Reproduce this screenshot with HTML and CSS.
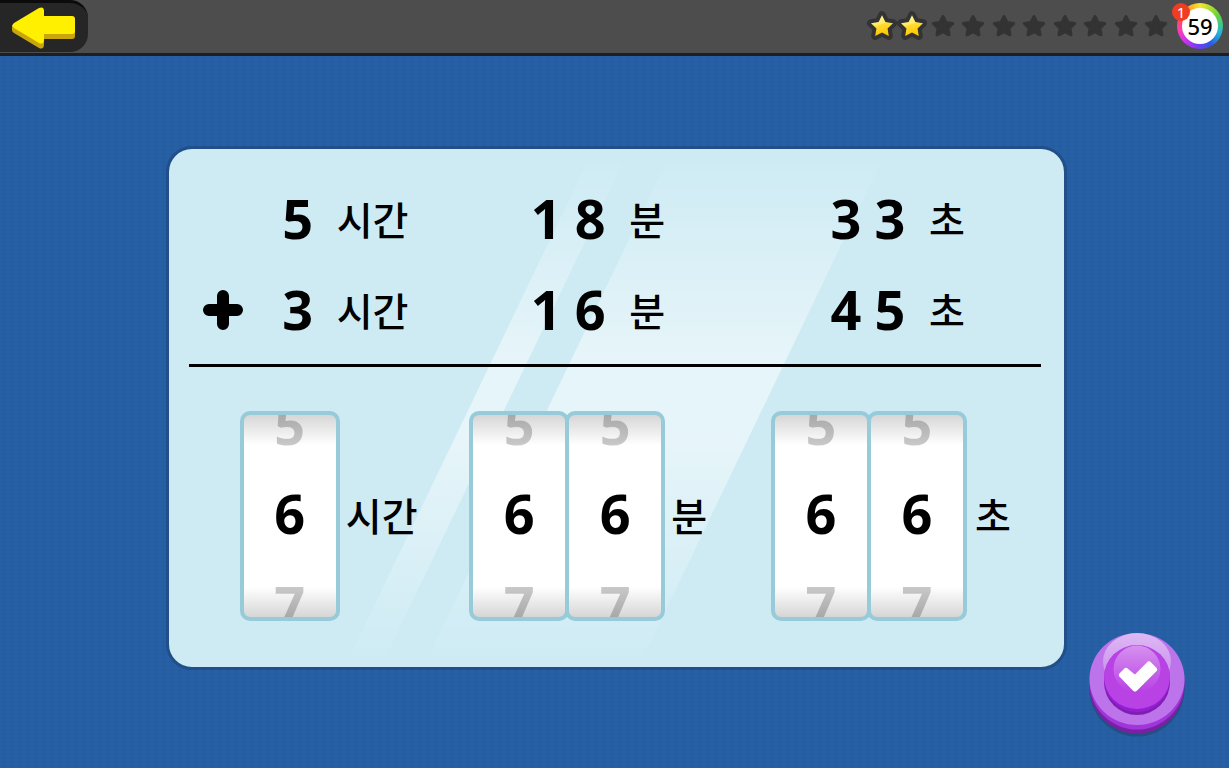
FILE: index.html
```html
<!DOCTYPE html>
<html lang="ko">
<head>
<meta charset="utf-8">
<title>시간의 덧셈</title>
<link rel="stylesheet" href="styles.css">
</head>
<body>
<svg class="defs" aria-hidden="true">
  <defs>
    <linearGradient id="gold" x1="0" y1="0" x2="0.3" y2="1">
      <stop offset="0" stop-color="#fffbb0"/><stop offset="0.5" stop-color="#ffea62"/><stop offset="0.55" stop-color="#ffdc32"/><stop offset="1" stop-color="#ffc800"/>
    </linearGradient>
    <symbol id="star" viewBox="0 0 30 30">
      <path d="M15 5.500l3 6 6.700 1-4.800 4.700 1.100 6.600-6-3.100-6 3.100 1.100-6.600-4.800-4.700 6.700-1z" stroke-linejoin="round"/>
    </symbol>
  </defs>
</svg>
<header class="bar">
  <button class="back" type="button" aria-label="뒤로">
    <svg viewBox="0 0 64 42" aria-hidden="true">
      <path d="M0 18V23Q0 25 2 26L27 41Q32 43 32 37V32H60Q63 32 63 29V12Z" fill="#c9a60b"/>
      <path d="M2 16L27 1Q32-1 32 4V9H60Q63 9 63 12V24Q63 27 60 27H32V32Q32 38 27 36L2 21Q-1 18.500 2 16Z" fill="#fff000"/>
    </svg>
  </button>
  <div class="progress" role="img" aria-label="2 / 10">
    <svg class="star on"><use href="#star"/></svg>
    <svg class="star on"><use href="#star"/></svg>
    <svg class="star"><use href="#star"/></svg>
    <svg class="star"><use href="#star"/></svg>
    <svg class="star"><use href="#star"/></svg>
    <svg class="star"><use href="#star"/></svg>
    <svg class="star"><use href="#star"/></svg>
    <svg class="star"><use href="#star"/></svg>
    <svg class="star"><use href="#star"/></svg>
    <svg class="star"><use href="#star"/></svg>
  </div>
  <div class="score"><span class="score-value">59</span><span class="badge">1</span></div>
</header>
<main class="stage">
  <section class="board">
    <svg class="shine" viewBox="0 0 896 520" preserveAspectRatio="none" aria-hidden="true">
      <defs>
        <linearGradient id="glass" gradientUnits="userSpaceOnUse" x1="0" y1="10" x2="0" y2="515">
          <stop offset="0" stop-color="#fff" stop-opacity="0"/><stop offset="0.4" stop-color="#fff" stop-opacity="0.5"/><stop offset="0.56" stop-color="#fff" stop-opacity="0.5"/><stop offset="1" stop-color="#fff" stop-opacity="0"/>
        </linearGradient>
      </defs>
      <path d="M425 0H461L212 520H176ZM504 0H719L470 520H255Z" fill="url(#glass)"/>
    </svg>
    <div class="row">
      <span></span>
      <div class="term"><b>5</b><span class="unit">시간</span></div>
      <div class="term"><b>1</b><b>8</b><span class="unit">분</span></div>
      <div class="term"><b>3</b><b>3</b><span class="unit">초</span></div>
    </div>
    <div class="row">
      <svg class="plus" viewBox="0 0 42 42" role="img" aria-label="+"><path d="M21 7V35M7 21H35"/></svg>
      <div class="term"><b>3</b><span class="unit">시간</span></div>
      <div class="term"><b>1</b><b>6</b><span class="unit">분</span></div>
      <div class="term"><b>4</b><b>5</b><span class="unit">초</span></div>
    </div>
    <hr class="rule">
    <div class="answers">
      <div class="answer">
        <div class="reels">
          <div class="reel"><button type="button">5</button><output>6</output><button type="button">7</button></div>
        </div>
        <span class="unit">시간</span>
      </div>
      <div class="answer">
        <div class="reels">
          <div class="reel"><button type="button">5</button><output>6</output><button type="button">7</button></div>
          <div class="reel"><button type="button">5</button><output>6</output><button type="button">7</button></div>
        </div>
        <span class="unit">분</span>
      </div>
      <div class="answer">
        <div class="reels">
          <div class="reel"><button type="button">5</button><output>6</output><button type="button">7</button></div>
          <div class="reel"><button type="button">5</button><output>6</output><button type="button">7</button></div>
        </div>
        <span class="unit">초</span>
      </div>
    </div>
  </section>
</main>
<button class="confirm" type="button" aria-label="확인">
  <svg viewBox="0 0 96 104" aria-hidden="true">
    <defs>
      <linearGradient id="outer-gloss" x1="0" y1="0" x2="0" y2="1"><stop offset="0" stop-color="#fff" stop-opacity="0.5"/><stop offset="1" stop-color="#fff" stop-opacity="0.12"/></linearGradient>
      <linearGradient id="inner-gloss" x1="0" y1="0" x2="0" y2="1"><stop offset="0" stop-color="#fff" stop-opacity="0.42"/><stop offset="1" stop-color="#fff" stop-opacity="0"/></linearGradient>
    </defs>
    <circle cx="48" cy="56" r="47.500" fill="#234f85"/>
    <circle cx="48" cy="53" r="47.500" fill="#7a20a2"/>
    <circle cx="48" cy="49" r="47.500" fill="#a035dc"/>
    <ellipse cx="48" cy="46" rx="47.500" ry="46" fill="#bd73e9"/>
    <ellipse cx="48" cy="28.500" rx="34" ry="28.500" fill="url(#outer-gloss)"/>
    <circle cx="48" cy="49" r="33" fill="#7f1fb0"/>
    <circle cx="48" cy="46" r="33" fill="#951dd6"/>
    <ellipse cx="48" cy="44" rx="33" ry="32" fill="#b842e4"/>
    <circle cx="48" cy="36" r="23.500" fill="url(#inner-gloss)"/>
    <path d="M33 42L37 38 46 45.500 60 31.500 65 36.500 46 55.500Z" fill="#fff" stroke="#fff" stroke-width="6" stroke-linejoin="round"/>
  </svg>
</button>
</body>
</html>
```

FILE: styles.css
```css
* {
  box-sizing: border-box;
}

body {
  margin: 0;
  min-height: 100vh;
  display: flex;
  flex-direction: column;
  background-color: #2760a5;
  background-image: radial-gradient(ellipse at center, #235a9e 0, #235a9e00 70%);
  background-size: 8px 4px;
  color: #000;
  font-family: "Noto Sans", "Noto Sans CJK KR", sans-serif;
}

button {
  padding: 0;
  border: 0;
  background: none;
  font: inherit;
  color: inherit;
  cursor: pointer;
}

svg {
  display: block;
}

.defs {
  position: absolute;
  width: 0;
  height: 0;
}

.bar {
  height: 56px;
  display: flex;
  align-items: center;
  padding: 0 6px 1px 0;
  background: #4d4d4d;
  border-bottom: 3px solid #1c1e21;
}

.back {
  align-self: stretch;
  width: 88px;
  padding: 0 0 0 12px;
  background: #262626;
  border-top: 3px solid #0b0b0b;
  border-radius: 0 18px 18px 0;
}

.back svg {
  width: 64px;
  height: 42px;
}

.progress {
  display: flex;
  align-items: center;
  justify-content: space-between;
  width: 304px;
  margin-left: auto;
}

.star {
  width: 30px;
  height: 30px;
  overflow: visible;
  fill: #333;
  stroke: #333;
  stroke-width: 3;
}

.star.on {
  width: 34px;
  height: 34px;
  margin: 0 -2px;
  fill: url(#gold);
  stroke-width: 7;
  paint-order: stroke;
}

.score {
  position: relative;
  width: 46px;
  height: 46px;
  margin-left: 6px;
  padding: 5px;
  border-radius: 50%;
  background: conic-gradient(#f4e72b, #63d43c 60deg, #22b6d8 110deg, #2e55e8 150deg, #7a3cf0 190deg, #d533ea 230deg, #ff3fae 260deg, #ff4b4b 295deg, #ff9d2a 325deg, #f4e72b);
}

.score-value {
  display: block;
  border-radius: 50%;
  background: #fff;
  text-align: center;
  font-size: 22px;
  font-weight: 500;
  line-height: 36px;
}

.badge {
  position: absolute;
  left: -5px;
  top: 0;
  width: 18px;
  height: 18px;
  border-radius: 50%;
  background: #ee3d23;
  color: #fff;
  font-size: 15px;
  line-height: 18px;
  text-align: center;
}

.stage {
  flex: 1;
  display: flex;
  justify-content: center;
  align-items: flex-start;
  padding: 90px 162px 0 166px;
}

.board {
  position: relative;
  flex: 1;
  max-width: 901px;
  padding: 23px 23px 46px 20px;
  border: 3px solid #204f8a;
  border-radius: 26px;
  background: #ceebf4;
}

.shine {
  position: absolute;
  inset: 0;
  width: 100%;
  height: 100%;
}

.row,
.rule,
.answers {
  position: relative;
}

.row {
  display: grid;
  grid-template-columns: 70fr 149fr 256fr 299fr 76fr;
  align-items: center;
  height: 91px;
}

.plus {
  width: 42px;
  height: 42px;
  margin: 3px 0 0 13px;
  fill: none;
  stroke: #000;
  stroke-width: 12;
  stroke-linecap: round;
}

.term {
  display: flex;
  justify-content: flex-end;
  align-items: center;
}

.term b,
.reel {
  font-size: 54px;
  font-weight: 700;
}

.term b {
  width: 44px;
  line-height: 76px;
  text-align: center;
}

.unit {
  font-family: "Noto Sans CJK KR", sans-serif;
  font-size: 39px;
  font-weight: 500;
  line-height: 60px;
  white-space: nowrap;
}

.term .unit {
  margin-left: 17px;
}

.rule {
  height: 3px;
  margin: 10px 0 44px;
  border: 0;
  background: #000;
}

.answers {
  display: grid;
  grid-template-columns: 228fr 289fr 303fr 30fr;
}

.answer {
  display: flex;
  justify-content: flex-end;
  align-items: center;
  gap: 6px;
}

.answer .unit {
  margin-bottom: 5px;
}

.answer:last-child {
  gap: 8px;
}

.reels {
  display: flex;
}

.reel {
  width: 100px;
  height: 210px;
  display: flex;
  flex-direction: column;
  overflow: hidden;
  border: 4px solid #98cbda;
  border-radius: 10px;
  background: linear-gradient(#d6d6d6, #fff 30px, #fff 172px, #d6d6d6);
  line-height: 90px;
  text-align: center;
}

.reel + .reel {
  margin-left: -4px;
}

.reel output {
  line-height: 88px;
}

.reel button {
  height: 54px;
  display: flex;
  justify-content: center;
  align-items: flex-end;
  overflow: hidden;
  color: #00000036;
}

.reel button:last-child {
  height: 60px;
  align-items: flex-start;
  line-height: 96px;
}

.confirm {
  position: fixed;
  right: 44px;
  bottom: 31px;
  width: 96px;
  height: 104px;
}
```
